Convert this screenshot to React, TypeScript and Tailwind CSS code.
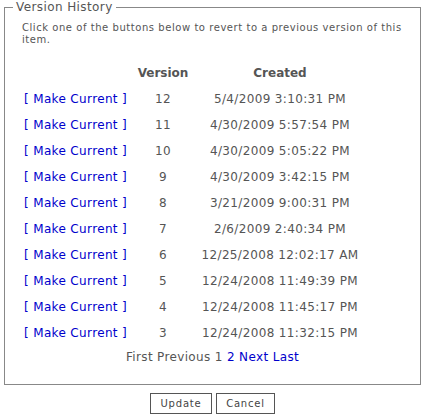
const versions = [
  { v: 12, created: '5/4/2009 3:10:31 PM' },
  { v: 11, created: '4/30/2009 5:57:54 PM' },
  { v: 10, created: '4/30/2009 5:05:22 PM' },
  { v: 9, created: '4/30/2009 3:42:15 PM' },
  { v: 8, created: '3/21/2009 9:00:31 PM' },
  { v: 7, created: '2/6/2009 2:40:34 PM' },
  { v: 6, created: '12/25/2008 12:02:17 AM' },
  { v: 5, created: '12/24/2008 11:49:39 PM' },
  { v: 4, created: '12/24/2008 11:45:17 PM' },
  { v: 3, created: '12/24/2008 11:32:15 PM' },
];

export default function App() {
  return (
    <div className="min-h-screen bg-white text-[#555] [font-family:'DejaVu_Sans',Verdana,sans-serif]">
      <fieldset className="mx-[4px] border border-[#888] px-[8px] pb-[18px]">
        <legend className="px-[3px] text-[12px] leading-[14px] tracking-[0.4px] text-[#555]">Version History</legend>
        <p className="mt-[8px] pl-[9px] text-[10px] leading-[12px] tracking-[0.55px]">
          Click one of the buttons below to revert to a previous version of this item.
        </p>
        <table className="mt-[13px] ml-[11px] border-collapse text-[12px] tracking-[0.35px]">
          <thead>
            <tr className="h-[27px]">
              <th className="w-[109px] p-0"></th>
              <th className="w-[60px] p-0 text-center font-bold tracking-normal">Version</th>
              <th className="w-[174px] p-0 text-center font-bold tracking-normal">Created</th>
            </tr>
          </thead>
          <tbody>
            {versions.map((r) => (
              <tr key={r.v} className="h-[26px]">
                <td className="whitespace-nowrap p-0">
                  <a href="#" className="text-[#0000cc]">[ Make Current ]</a>
                </td>
                <td className="p-0 text-center">{r.v}</td>
                <td className="whitespace-nowrap p-0 text-center">{r.created}</td>
              </tr>
            ))}
          </tbody>
        </table>
        <div className="mt-[2px] text-center text-[12px] tracking-[0.35px]">
          First Previous 1 <a href="#" className="text-[#0000cc]">2</a>{' '}
          <a href="#" className="text-[#0000cc]">Next</a>{' '}
          <a href="#" className="text-[#0000cc]">Last</a>
        </div>
      </fieldset>
      <div className="mt-[8px] flex justify-center gap-[4px]">
        <button className="h-[21px] w-[62px] border border-[#555] bg-white text-[10px] tracking-[0.8px] text-[#444]">Update</button>
        <button className="h-[21px] w-[59px] border border-[#555] bg-white text-[10px] tracking-[0.8px] text-[#444]">Cancel</button>
      </div>
    </div>
  );
}
